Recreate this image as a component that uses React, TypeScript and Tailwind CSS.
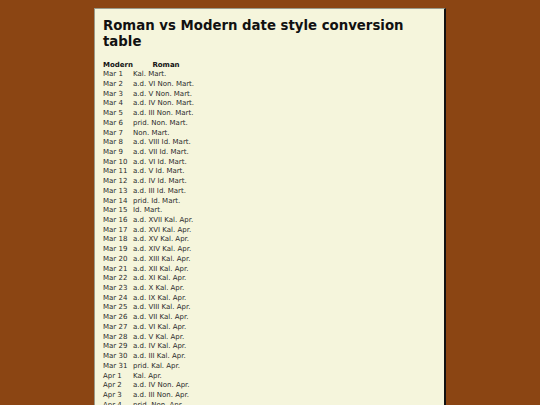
const rows: [string, string][] = [
  ['Mar 1', 'Kal. Mart.'],
  ['Mar 2', 'a.d. VI Non. Mart.'],
  ['Mar 3', 'a.d. V Non. Mart.'],
  ['Mar 4', 'a.d. IV Non. Mart.'],
  ['Mar 5', 'a.d. III Non. Mart.'],
  ['Mar 6', 'prid. Non. Mart.'],
  ['Mar 7', 'Non. Mart.'],
  ['Mar 8', 'a.d. VIII Id. Mart.'],
  ['Mar 9', 'a.d. VII Id. Mart.'],
  ['Mar 10', 'a.d. VI Id. Mart.'],
  ['Mar 11', 'a.d. V Id. Mart.'],
  ['Mar 12', 'a.d. IV Id. Mart.'],
  ['Mar 13', 'a.d. III Id. Mart.'],
  ['Mar 14', 'prid. Id. Mart.'],
  ['Mar 15', 'Id. Mart.'],
  ['Mar 16', 'a.d. XVII Kal. Apr.'],
  ['Mar 17', 'a.d. XVI Kal. Apr.'],
  ['Mar 18', 'a.d. XV Kal. Apr.'],
  ['Mar 19', 'a.d. XIV Kal. Apr.'],
  ['Mar 20', 'a.d. XIII Kal. Apr.'],
  ['Mar 21', 'a.d. XII Kal. Apr.'],
  ['Mar 22', 'a.d. XI Kal. Apr.'],
  ['Mar 23', 'a.d. X Kal. Apr.'],
  ['Mar 24', 'a.d. IX Kal. Apr.'],
  ['Mar 25', 'a.d. VIII Kal. Apr.'],
  ['Mar 26', 'a.d. VII Kal. Apr.'],
  ['Mar 27', 'a.d. VI Kal. Apr.'],
  ['Mar 28', 'a.d. V Kal. Apr.'],
  ['Mar 29', 'a.d. IV Kal. Apr.'],
  ['Mar 30', 'a.d. III Kal. Apr.'],
  ['Mar 31', 'prid. Kal. Apr.'],
  ['Apr 1', 'Kal. Apr.'],
  ['Apr 2', 'a.d. IV Non. Apr.'],
  ['Apr 3', 'a.d. III Non. Apr.'],
  ['Apr 4', 'prid. Non. Apr.'],
  ['Apr 5', 'Non. Apr.'],
  ['Apr 6', 'a.d. VIII Id. Apr.'],
];

const App: React.FC = () => {
  return (
    <div
      className="h-screen overflow-hidden bg-[#8b4513] pt-[8px]"
      style={{ fontFamily: '"DejaVu Sans", Verdana, sans-serif' }}
    >
      <div className="mx-auto w-[352px] border-l border-t border-[#9a9a8a] border-r-2 border-r-[#111] bg-[#f5f5dc] px-[8px] pb-4 pt-[9px]">
        <h1 className="text-[13.3px] font-bold leading-[16px] text-[#111]">
          Roman vs Modern date style conversion table
        </h1>

        <table className="mt-[10.5px] border-collapse text-[7px] text-[#2a2a2a]">
          <thead>
            <tr className="h-[9.72px]">
              <th className="w-[30px] p-0 text-left font-bold leading-[9.72px] text-[#111]">
                Modern
              </th>
              <th className="w-[66px] p-0 text-center font-bold leading-[9.72px] text-[#111]">
                Roman
              </th>
            </tr>
          </thead>
          <tbody>
            {rows.map(([modern, roman]) => (
              <tr key={modern} className="h-[9.72px]">
                <td className="p-0 leading-[9.72px] whitespace-nowrap">{modern}</td>
                <td className="p-0 leading-[9.72px] whitespace-nowrap">{roman}</td>
              </tr>
            ))}
          </tbody>
        </table>
      </div>
    </div>
  );
};

export default App;
